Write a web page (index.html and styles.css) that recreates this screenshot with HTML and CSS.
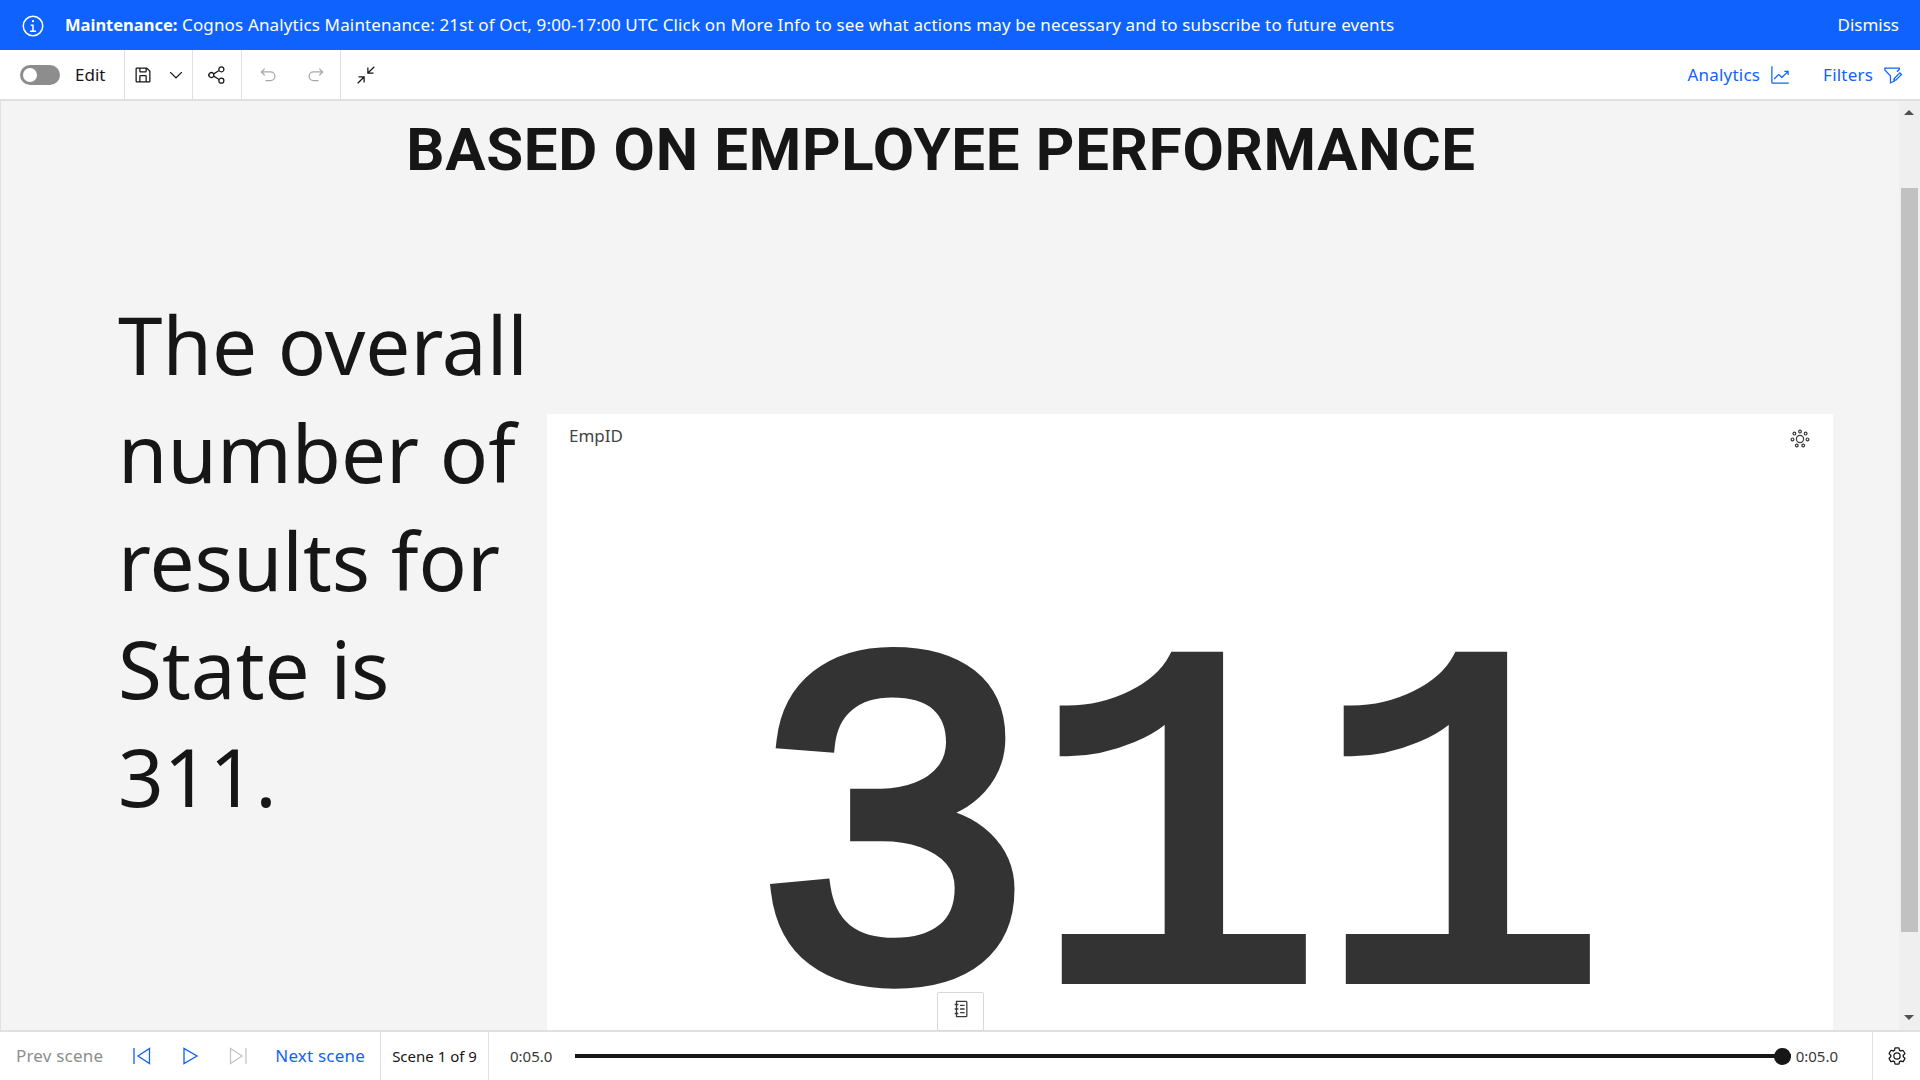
FILE: index.html
```html
<!DOCTYPE html>
<html lang="en">
<head>
    <meta charset="UTF-8">
    <meta name="viewport" content="width=device-width, initial-scale=1.0">
    <title>Story</title>
    <link rel="stylesheet" href="styles.css">
</head>
<body>
    <div class="banner">
        <svg class="banner-icon" viewBox="0 0 32 32"><path d="M17 22v-8h-4v2h2v6h-3v2h8v-2h-3z"/><path d="M16 8a1.5 1.5 0 1 0 0 3 1.5 1.5 0 0 0 0-3z"/><path d="M16 30a14 14 0 1 1 0-28 14 14 0 0 1 0 28zm0-26a12 12 0 1 0 0 24 12 12 0 0 0 0-24z"/></svg>
        <p class="banner-text"><b>Maintenance:</b> Cognos Analytics Maintenance: 21st of Oct, 9:00-17:00 UTC Click on More Info to see what actions may be necessary and to subscribe to future events</p>
        <span class="banner-dismiss">Dismiss</span>
    </div>

    <div class="toolbar">
        <div class="tool-group edit-group">
            <span class="toggle"><span class="toggle-knob"></span></span>
            <span class="edit-label">Edit</span>
        </div>
        <div class="tool-group save-group">
            <svg class="icon" viewBox="0 0 32 32"><path d="M27.71,9.29l-5-5A1,1,0,0,0,22,4H6A2,2,0,0,0,4,6V26a2,2,0,0,0,2,2H26a2,2,0,0,0,2-2V10A1,1,0,0,0,27.71,9.29ZM12,6h8v4H12Zm8,20H12V18h8Zm2,0V18a2,2,0,0,0-2-2H12a2,2,0,0,0-2,2v8H6V6h4v4a2,2,0,0,0,2,2h8a2,2,0,0,0,2-2V6.41l4,4V26Z"/></svg>
            <svg class="icon" viewBox="0 0 32 32"><path d="M16 22L6 12 7.4 10.6 16 19.2 24.6 10.6 26 12z"/></svg>
        </div>
        <div class="tool-group share-group">
            <svg class="icon" viewBox="0 0 32 32"><path d="M23,20a5,5,0,0,0-3.89,1.89L11.8,17.32a4.46,4.46,0,0,0,0-2.64l7.31-4.57A5,5,0,1,0,18,7a4.79,4.79,0,0,0,.2,1.32l-7.31,4.57a5,5,0,1,0,0,6.22l7.31,4.57A4.79,4.79,0,0,0,18,25a5,5,0,1,0,5-5ZM23,4a3,3,0,1,1-3,3A3,3,0,0,1,23,4ZM7,19a3,3,0,1,1,3-3A3,3,0,0,1,7,19Zm16,9a3,3,0,1,1,3-3A3,3,0,0,1,23,28Z"/></svg>
        </div>
        <div class="tool-group history-group">
            <svg class="icon icon-off" viewBox="0 0 32 32"><path d="M20,10H7.8149l3.5874-3.5859L10,5,4,11,10,17l1.4023-1.4146L7.8179,12H20a6,6,0,0,1,0,12H12v2h8a8,8,0,0,0,0-16Z"/></svg>
            <svg class="icon icon-off" viewBox="0 0 32 32"><path d="M12,10H24.1851L20.5977,6.4141,22,5,28,11,22,17l-1.4023-1.4146L24.1821,12H12a6,6,0,0,0,0,12h8v2H12a8,8,0,0,1,0-16Z"/></svg>
        </div>
        <div class="tool-group collapse-group">
            <svg class="icon icon-collapse" viewBox="0 0 32 32"><path d="M4 18v2h6.586L2 28.582 3.414 30 12 21.414V28h2V18z"/><path d="M30 3.416 28.584 2 20 10.586V4h-2v10h10v-2h-6.586z"/></svg>
        </div>
        <div class="toolbar-right">
            <span class="tool-link">Analytics</span>
            <svg class="icon icon-blue" viewBox="0 0 32 32"><path d="M4,2H2V28a2,2,0,0,0,2,2H30V28H4Z"/><path d="M30,9H23v2h3.59L19,18.59l-4.29-4.3a1,1,0,0,0-1.42,0L6,21.59,7.41,23,14,16.41l4.29,4.3a1,1,0,0,0,1.42,0L28,12.41V16h2Z"/></svg>
            <span class="tool-link filters-link">Filters</span>
            <svg class="icon icon-blue" viewBox="0 0 32 32"><path d="M2 4h25v3.6l-4 4-1.500-1.500L25 6.500V6H4v1.500L13 17v10l4-2v-4h2v5.200L11 30V18L2 8.500z"/><path d="M27 11l4 4-10 10h-4v-4zm0 2.800L19 21.800V23h1.200l8-8z"/></svg>
        </div>
    </div>

    <div class="middle">
        <div class="stage">
            <h1 class="scene-title">BASED ON EMPLOYEE PERFORMANCE</h1>
            <div class="scene-body">
                <p class="scene-text">The overall number of results for State is 311.</p>
                <div class="kpi-card">
                    <div class="kpi-head">
                        <span class="kpi-label">EmpID</span>
                        <svg class="kpi-gear" viewBox="0 0 20 20"><circle cx="10" cy="10" r="3.600"/><circle cx="10" cy="2.600" r="1.400"/><circle cx="4.400" cy="4.600" r="1.400"/><circle cx="15.600" cy="4.600" r="1.400"/><circle cx="2.500" cy="10.400" r="1.400"/><circle cx="17.500" cy="10.400" r="1.400"/><circle cx="6.800" cy="16.500" r="1.400"/><circle cx="13.200" cy="16.500" r="1.400"/></svg>
                    </div>
                    <div class="kpi-value">311</div>
                </div>
            </div>
            <button class="notes-btn">
                <svg class="icon" viewBox="0 0 18 20"><path d="M4 1.500h10.500a1 1 0 0 1 1 1v15a1 1 0 0 1-1 1H4z" fill="none" stroke="#393939" stroke-width="1.400"/><path d="M2 5h4M2 10h4M2 15h4M8 6h5M8 10h5M8 14h5" stroke="#393939" stroke-width="1.400"/></svg>
            </button>
        </div>
        <div class="scrollbar">
            <span class="scroll-arrow arrow-up"></span>
            <span class="scroll-thumb"></span>
            <span class="scroll-arrow arrow-down"></span>
        </div>
    </div>

    <div class="player">
        <div class="player-nav">
            <span class="nav-text nav-off">Prev scene</span>
            <svg class="step-icon step-prev" viewBox="0 0 18 18"><path d="M1 1v16" /><path d="M16.500 1.500v15L5 9z"/></svg>
            <svg class="step-icon step-play" viewBox="0 0 18 18"><path d="M3 1.500v15L16 9z"/></svg>
            <svg class="step-icon step-next" viewBox="0 0 18 18"><path d="M17 1v16"/><path d="M1.500 1.500v15L13 9z"/></svg>
            <span class="nav-text nav-on">Next scene</span>
        </div>
        <div class="scene-count">Scene 1 of 9</div>
        <div class="timeline">
            <span class="time time-start">0:05.0</span>
            <span class="track"><span class="knob"></span></span>
            <span class="time time-end">0:05.0</span>
        </div>
        <div class="player-settings">
            <svg class="icon icon-gear" viewBox="0 0 32 32"><path d="M27,16.76c0-.25,0-.5,0-.76s0-.51,0-.77l1.92-1.68A2,2,0,0,0,29.3,11L26.94,7a2,2,0,0,0-1.73-1,2,2,0,0,0-.64.1l-2.43.82a11.35,11.35,0,0,0-1.31-.75l-.51-2.52a2,2,0,0,0-2-1.61H13.64a2,2,0,0,0-2,1.61l-.51,2.52a11.48,11.48,0,0,0-1.32.75L7.43,6.06A2,2,0,0,0,6.79,6,2,2,0,0,0,5.06,7L2.7,11a2,2,0,0,0,.41,2.51L5,15.24c0,.25,0,.5,0,.76s0,.51,0,.77L3.11,18.45A2,2,0,0,0,2.7,21L5.06,25a2,2,0,0,0,1.73,1,2,2,0,0,0,.64-.1l2.43-.82a11.35,11.35,0,0,0,1.31.75l.51,2.52a2,2,0,0,0,2,1.61h4.72a2,2,0,0,0,2-1.61l.51-2.52a11.48,11.48,0,0,0,1.32-.75l2.42.82a2,2,0,0,0,.64.1,2,2,0,0,0,1.73-1L29.3,21a2,2,0,0,0-.41-2.51ZM25.21,24l-3.43-1.16a8.86,8.86,0,0,1-2.71,1.57L18.36,28H13.64l-.71-3.55a9.36,9.36,0,0,1-2.7-1.57L6.79,24,4.43,20l2.72-2.4a8.9,8.9,0,0,1,0-3.13L4.43,12,6.79,8l3.43,1.16a8.86,8.86,0,0,1,2.71-1.57L13.64,4h4.72l.71,3.55a9.36,9.36,0,0,1,2.7,1.57L25.21,8,27.57,12l-2.72,2.4a8.9,8.9,0,0,1,0,3.13L27.57,20Z"/><path d="M16,22a6,6,0,1,1,6-6A5.94,5.94,0,0,1,16,22Zm0-10a3.91,3.91,0,0,0-4,4,3.91,3.91,0,0,0,4,4,3.91,3.91,0,0,0,4-4A3.91,3.91,0,0,0,16,12Z"/></svg>
        </div>
    </div>
</body>
</html>
```

FILE: styles.css
```css
* {
    box-sizing: border-box;
}
html,
body {
    height: 100%;
}
body {
    margin: 0;
    display: flex;
    flex-direction: column;
    overflow: hidden;
    font-family: "Noto Sans", Arial, sans-serif;
    font-size: 17px;
    color: #161616;
    background: #fff;
}

/* banner */
.banner {
    height: 50px;
    flex: none;
    display: flex;
    align-items: center;
    padding: 0 21px 2px 21px;
    background: #0f62fe;
    color: #fff;
}
.banner-icon {
    width: 24px;
    height: 24px;
    flex: none;
    fill: #fff;
    margin-top: 4px;
}
.banner-text {
    margin: 0 0 0 20px;
    flex: 1;
    letter-spacing: 0.15px;
}
.banner-text b {
    font-size: 16.5px;
    font-weight: 700;
    letter-spacing: 0;
}

/* toolbar */
.toolbar {
    height: 51px;
    flex: none;
    display: flex;
    border-bottom: 2px solid #e0e0e0;
    background: #fff;
}
.tool-group {
    display: flex;
    align-items: center;
    border-right: 1px solid #e0e0e0;
}
.edit-group {
    width: 125px;
    padding-left: 20px;
}
.toggle {
    width: 40px;
    height: 20px;
    padding: 3px;
    border-radius: 10px;
    background: #8d8d8d;
}
.toggle-knob {
    display: block;
    width: 14px;
    height: 14px;
    border-radius: 50%;
    background: #fff;
}
.edit-label {
    margin-left: 15px;
}
.icon {
    width: 20px;
    height: 20px;
    fill: #161616;
    flex: none;
}
.icon-off {
    fill: #a8a8a8;
}
.icon-blue {
    fill: #0f62fe;
}
.save-group {
    width: 68px;
    padding-left: 8px;
    gap: 13px;
}
.share-group {
    width: 49px;
    padding-left: 14px;
}
.history-group {
    width: 99px;
    padding-left: 16px;
    gap: 28px;
}
.collapse-group {
    border-right: none;
    padding-left: 15px;
}
.toolbar-right {
    margin-left: auto;
    display: flex;
    align-items: center;
    padding-right: 17px;
    color: #0f62fe;
}
.tool-link {
    letter-spacing: 0.2px;
}
.tool-link + .icon {
    margin-left: 10px;
}
.filters-link {
    margin-left: 33px;
}

/* stage */
.middle {
    flex: 1;
    min-height: 0;
    display: flex;
}
.stage {
    position: relative;
    flex: 1;
    display: flex;
    flex-direction: column;
    padding-left: 1px;
    background: #f4f4f4;
    border-left: 1px solid #e0e0e0;
}
.scene-title {
    margin: 0;
    padding: 14px 19px 0 0;
    font-family: Roboto, Arial, sans-serif;
    font-size: 60px;
    line-height: 70px;
    font-weight: 700;
    letter-spacing: 0.7px;
    text-align: center;
    white-space: nowrap;
}
.scene-body {
    flex: 1;
    min-height: 0;
    display: flex;
    padding: 105px 66px 0 116px;
}
.scene-text {
    margin: 0;
    width: 429px;
    flex: none;
    font-size: 80px;
    line-height: 108px;
    font-weight: 400;
}
.kpi-card {
    flex: 1;
    display: flex;
    flex-direction: column;
    margin-top: 124px;
    background: #fff;
    min-height: 0;
}
.kpi-head {
    display: flex;
    justify-content: space-between;
    padding: 10px 23px 0 22px;
    color: #444;
}
.kpi-gear {
    width: 20px;
    height: 20px;
    fill: none;
    stroke: #393939;
    stroke-width: 1.2;
    margin: 5px 0 0;
}
.kpi-value {
    padding: 199px 30px 0 0;
    text-align: center;
    font-family: "Liberation Mono", monospace;
    font-size: 480px;
    line-height: 400px;
    letter-spacing: -4px;
    color: #333;
    -webkit-text-stroke: 16px #333;
}
.notes-btn {
    position: absolute;
    left: 936px;
    bottom: -1px;
    width: 47px;
    height: 39px;
    display: flex;
    align-items: center;
    justify-content: center;
    padding: 0 0 6px;
    background: #fff;
    border: 1px solid #d8d8d8;
    border-radius: 2px;
}
.notes-btn .icon {
    width: 18px;
    height: 18px;
}

/* scrollbar */
.scrollbar {
    width: 21px;
    flex: none;
    display: flex;
    flex-direction: column;
    align-items: flex-end;
    padding-right: 2px;
    background: #efefef;
}
.scroll-arrow {
    width: 0;
    height: 0;
    margin-right: 4px;
    border-left: 5px solid transparent;
    border-right: 5px solid transparent;
}
.arrow-up {
    margin-top: 9px;
    border-bottom: 5px solid #505050;
}
.arrow-down {
    margin-top: 83px;
    border-top: 5px solid #505050;
}
.scroll-thumb {
    display: block;
    width: 17px;
    height: 744px;
    margin-top: 73px;
    background: #c1c1c1;
}

/* player */
.player {
    height: 50px;
    flex: none;
    display: flex;
    align-items: stretch;
    border-top: 2px solid #e0e0e0;
    background: #fff;
}
.player-nav {
    width: 381px;
    display: flex;
    align-items: center;
    padding-left: 16px;
    border-right: 1px solid #e0e0e0;
}
.nav-text {
    margin-top: -2px;
    letter-spacing: 0.2px;
}
.nav-off {
    color: #8d8d8d;
}
.nav-on {
    color: #0f62fe;
}
.step-icon {
    width: 18px;
    height: 18px;
    fill: none;
    stroke: #0f62fe;
    stroke-width: 1.300;
    flex: none;
}
.step-prev {
    margin-left: 30px;
}
.step-play {
    margin-left: 30px;
}
.step-next {
    margin-left: 30px;
    stroke: #c6c6c6;
}
.step-next + .nav-text {
    margin-left: 28px;
}
.scene-count {
    width: 108px;
    display: flex;
    align-items: center;
    justify-content: center;
    font-size: 15px;
    border-right: 1px solid #e0e0e0;
}
.timeline {
    flex: 1;
    display: flex;
    align-items: center;
    padding: 0 34px 0 21px;
    border-right: 1px solid #e0e0e0;
}
.time {
    font-size: 15px;
    color: #393939;
}
.track {
    flex: 1;
    display: flex;
    justify-content: flex-end;
    align-items: center;
    height: 4px;
    margin: 0 5px 0 23px;
    background: #161616;
}
.knob {
    width: 17px;
    height: 17px;
    flex: none;
    border-radius: 50%;
    background: #161616;
}
.player-settings {
    width: 47px;
    display: flex;
    align-items: center;
    justify-content: center;
}
```
